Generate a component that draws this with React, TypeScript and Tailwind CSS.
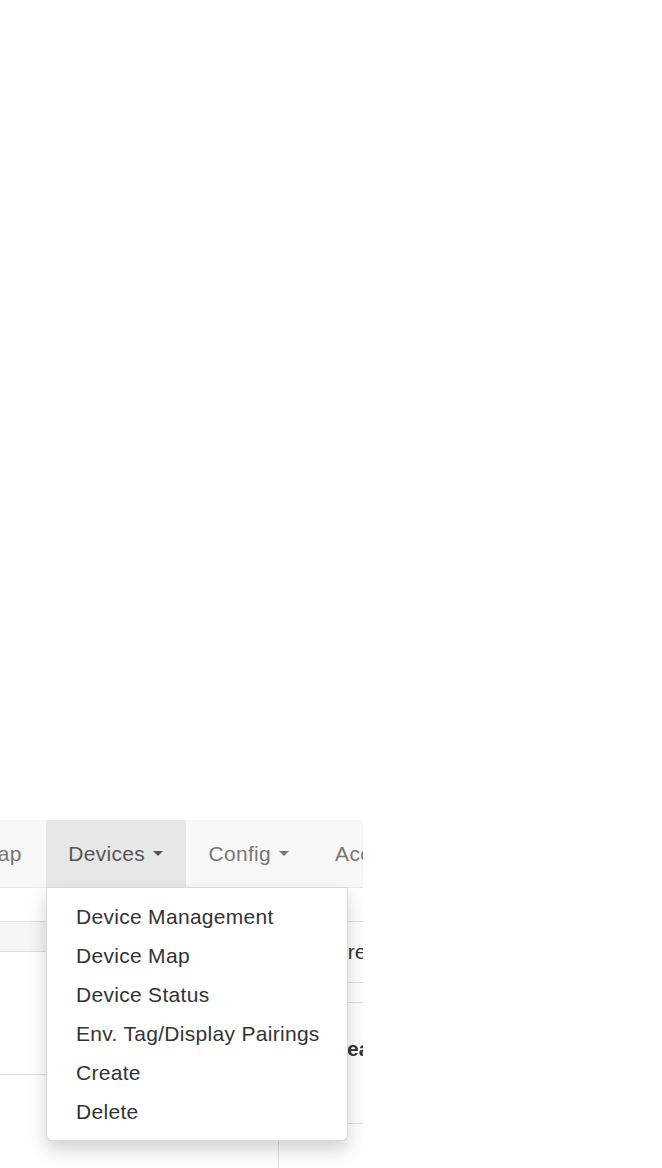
import React from "react";

const Caret = () => (
  <span className="inline-block w-0 h-0 ml-[8px] border-t-[5px] border-t-current border-x-[5px] border-x-transparent align-middle" />
);

export default function App() {
  const items = [
    "Device Management",
    "Device Map",
    "Device Status",
    "Env. Tag/Display Pairings",
    "Create",
    "Delete",
  ];
  return (
    <div className="w-[662px] h-[1168px] bg-white overflow-hidden font-['Liberation_Sans',Arial,sans-serif]">
      <div className="h-[820px]" />
      <div className="relative w-[363px] h-[348px] overflow-hidden">
        {/* navbar */}
        <nav className="flex h-[68px] bg-[#f8f8f8] border-b border-[#e7e7e7] text-[21px] leading-[30px] tracking-[0.3px] text-[#777] whitespace-nowrap">
          <div className="ml-[-44px] px-[24px] flex items-center">Map</div>
          <div className="px-[22.5px] flex items-center bg-[#e7e7e7] text-[#555]">
            <span>Devices</span>
            <Caret />
          </div>
          <div className="px-[23px] flex items-center">
            <span>Config</span>
            <Caret />
          </div>
          <div className="px-[23px] flex items-center">Account</div>
        </nav>

        {/* page content underneath */}
        <div className="flex h-[280px]">
          <div className="w-[278px] shrink-0 pt-[33px]">
            <div className="border-t border-[#ddd] h-[31px] bg-[#f5f5f5] border-b" />
            <div className="h-[123px] border-b border-[#ddd]" />
          </div>
          <div className="flex-1 border-l border-[#ddd] pt-[33px] text-[21px] text-[#333] whitespace-nowrap">
            <div className="border-t border-[#ddd] h-[62px] border-b flex items-center pl-[35px]">
              Current
            </div>
            <div className="h-[20px] border-b border-[#ddd]" />
            <div className="h-[121px] border-b border-[#ddd] pt-[31px] leading-[30px] pl-[54px] font-bold">
              Search
            </div>
          </div>
        </div>

        {/* dropdown */}
        <div className="absolute left-[46px] top-[67px] w-[302px] bg-white border border-[rgba(0,0,0,0.15)] rounded-b-[6px] shadow-[0_9px_18px_rgba(0,0,0,0.175)] pt-[9px] pb-[9px]">
          {items.map((t) => (
            <div key={t} className="h-[39px] leading-[39px] pl-[29px] text-[21px] tracking-[0.3px] text-[#333] whitespace-nowrap">
              {t}
            </div>
          ))}
        </div>
      </div>
    </div>
  );
}
